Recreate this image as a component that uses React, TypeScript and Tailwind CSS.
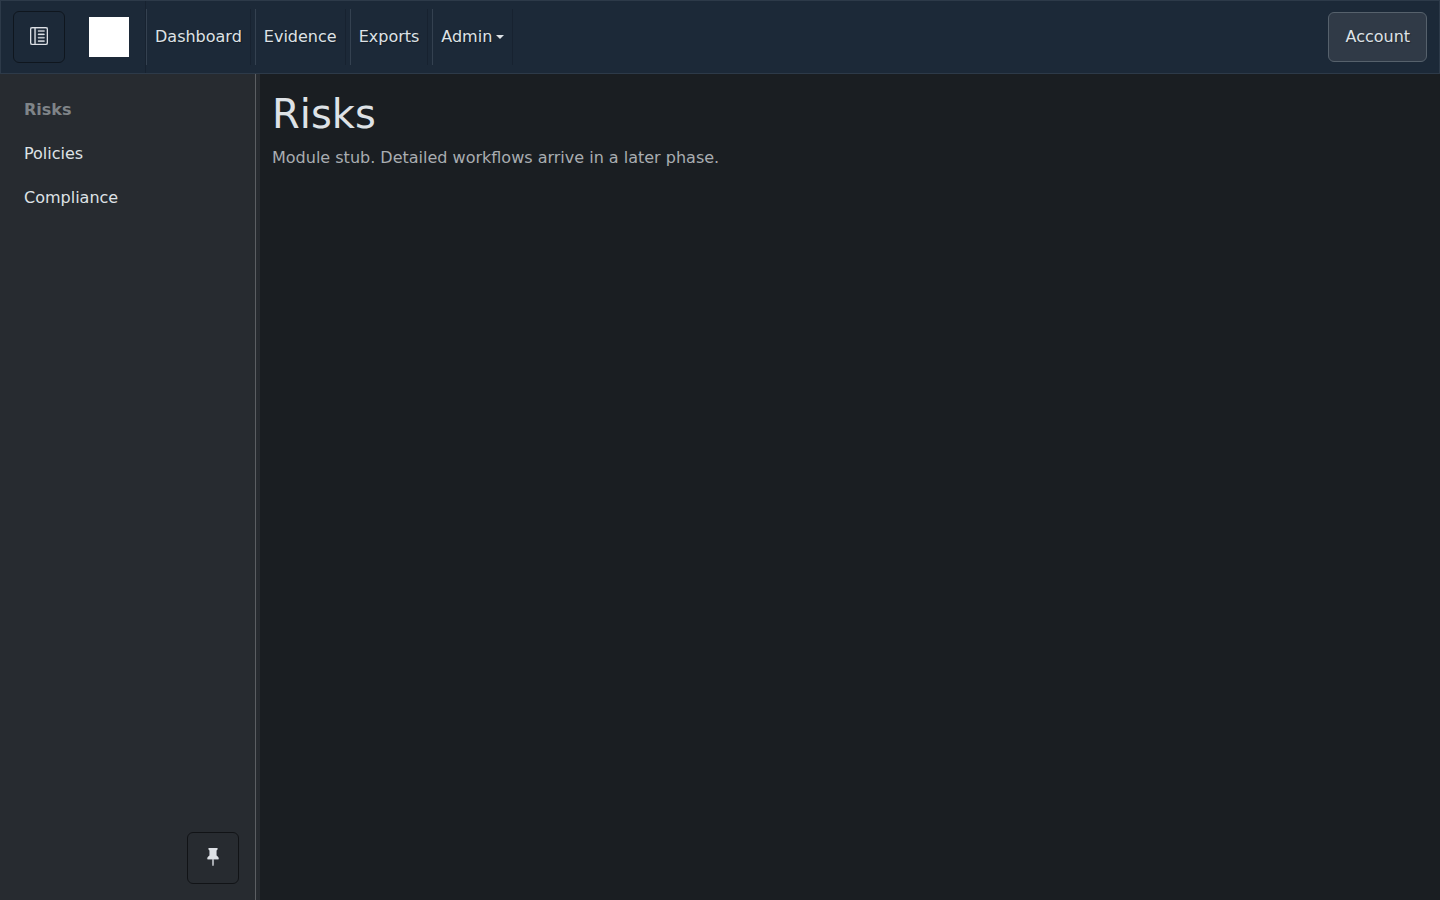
import type { ReactNode } from "react";
import { BsLayoutTextSidebarReverse, BsPinFill } from "react-icons/bs";

const shadow = "[text-shadow:1px_1px_1px_rgba(0,0,0,0.3)]";

function NavItem({ children, className }: { children: ReactNode; className: string }) {
  return (
    <a
      href="#"
      className={`flex h-14 items-center border-l border-l-[#344150] border-r border-r-[#172230] text-[#dee2e6] ${shadow} ${className}`}
    >
      {children}
    </a>
  );
}

export default function App() {
  return (
    <div className="flex h-screen flex-col overflow-hidden bg-[#1a1e22] font-['DejaVu_Sans',sans-serif] text-base leading-6 text-[#dee2e6]">
      <header className="flex h-[74px] shrink-0 items-center border border-[#2d3a49] bg-[#1c2938] px-3">
        <button className="flex size-[52px] items-center justify-center rounded-md border border-[#0f161e]">
          <BsLayoutTextSidebarReverse className="relative -top-px size-[18px] text-[#dee2e6]" stroke="currentColor" strokeWidth={0.3} />
        </button>
        <div className="ml-4 flex h-[72px] w-[65px] items-center border-r border-[#172230] pl-2">
          <div className="size-10 bg-white" />
        </div>
        <nav className="flex items-center">
          <NavItem className="mr-1 w-[105px] pl-2">Dashboard</NavItem>
          <NavItem className="mr-1 w-[91px] pl-[7.8px]">Evidence</NavItem>
          <NavItem className="mr-1 w-[78px] pl-[7.7px]">Exports</NavItem>
          <NavItem className="w-[81px] pl-[8.3px]">
            Admin
            <span className="ml-[3.7px] border-x-[4px] border-t-[4px] border-x-transparent border-t-[#dee2e6]" />
          </NavItem>
        </nav>
        <button
          className={`ml-auto flex h-[50px] w-[99px] items-center justify-center rounded-md border border-[#56616c] bg-[#303a47] pl-[0.6px] ${shadow}`}
        >
          Account
        </button>
      </header>
      <div className="flex min-h-0 flex-1">
        <aside className="flex w-[260px] shrink-0 bg-[#272b30]">
          <div className="flex w-64 flex-col border-r border-[#5b5e62] py-3.5">
            <nav className="flex flex-col">
              <a href="#" className="px-6 py-2.5 font-bold text-[#7f8488]">Risks</a>
              <a href="#" className="px-6 py-2.5">Policies</a>
              <a href="#" className="px-6 py-2.5">Compliance</a>
            </nav>
            <button className="mb-0.5 mr-4 mt-auto flex size-[52px] items-center justify-center self-end rounded-md border border-[#111316]">
              <BsPinFill className="relative -top-px size-[18px]" stroke="currentColor" strokeWidth={0.3} />
            </button>
          </div>
        </aside>
        <main className="flex-1 px-3 pt-4">
          <h1 className="mb-2 text-[40px] leading-[48px]">Risks</h1>
          <p className="text-[#a9adb1]">Module stub. Detailed workflows arrive in a later phase.</p>
        </main>
      </div>
    </div>
  );
}
